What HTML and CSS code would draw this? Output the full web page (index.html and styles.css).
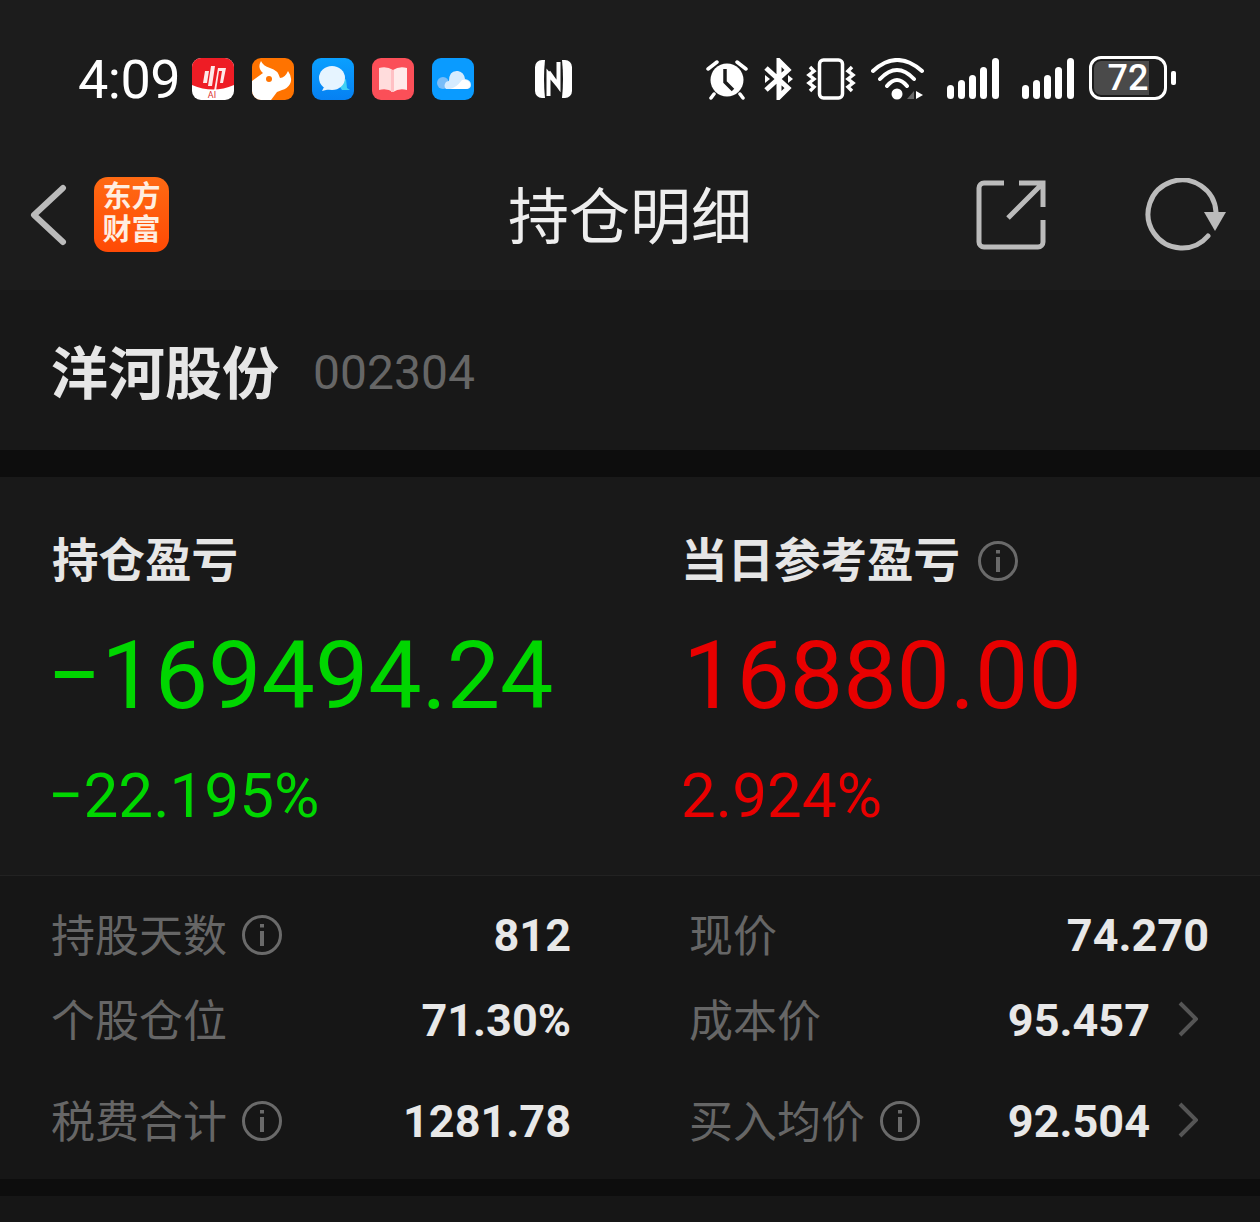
FILE: index.html
```html
<!DOCTYPE html>
<html lang="zh-CN">
<head>
    <meta charset="UTF-8">
    <title>持仓明细</title>
    <link rel="stylesheet" href="styles.css">
</head>
<body>
    <div class="phone">
        <!-- Status bar -->
        <div class="status-bar">
            <span class="clock">4:09</span>
            <div class="app-icons">
                <svg class="app-icon" viewBox="0 0 42 42">
                    <rect width="42" height="42" rx="9" fill="#fff"/>
                    <path d="M0 9a9 9 0 0 1 9-9h24a9 9 0 0 1 9 9v18q-21 9-42 0z" fill="#ee1c25"/>
                    <path d="M11 25l2-12h4l-2 12zM16 28l3-20h4l-3 20zM22 33l4-23h8l-3 15h-3l2-12h-3l-3 20z" fill="#fff" opacity=".9"/>
                    <text x="20" y="40" class="ai-label">AI</text>
                </svg>
                <svg class="app-icon" viewBox="0 0 42 42">
                    <rect width="42" height="42" rx="9" fill="#ff7300"/>
                    <path d="M0 23L11 15Q5 10 9 3Q11 8 18 10Q26 12 28 20Q33 20 36 13Q41 20 38 26Q35 31 30 32L25 34L19 42H9a9 9 0 0 1-9-9z" fill="#fff"/>
                    <circle cx="17" cy="21" r="3" fill="#ff7300"/>
                </svg>
                <svg class="app-icon" viewBox="0 0 42 42">
                    <defs>
                        <linearGradient id="blue-grad" x1="0" y1="0" x2="0" y2="1">
                            <stop offset="0" stop-color="#0aa0ff"/>
                            <stop offset="1" stop-color="#0680f2"/>
                        </linearGradient>
                    </defs>
                    <rect width="42" height="42" rx="9" fill="url(#blue-grad)"/>
                    <path d="M26 26l8-5 1 9 3 2-8 0z" fill="#3fd0f5"/>
                    <ellipse cx="20" cy="20" rx="13" ry="12" fill="#e6f4ff"/>
                    <path d="M12 29l-2 4 8-2z" fill="#e6f4ff"/>
                </svg>
                <svg class="app-icon" viewBox="0 0 42 42">
                    <rect width="42" height="42" rx="9" fill="#fb4f58"/>
                    <path d="M7 10q8-2 14 2v22q-6-4-14-2z" fill="#ffdcdc"/>
                    <path d="M35 10q-8-2-14 2v22q6-4 14-2z" fill="#ffeaea"/>
                    <path d="M19 12h3v22h-3z" fill="#ffc0c4"/>
                </svg>
                <svg class="app-icon" viewBox="0 0 42 42">
                    <rect width="42" height="42" rx="9" fill="#0a9bff"/>
                    <circle cx="11" cy="25" r="6" fill="#79bdf8"/>
                    <path d="M14 31q-3-3 0-7 2-1 3-1 0-11 9-10 6 1 7 8 6 1 6 6 0 4-5 4z" fill="#d6ecff"/>
                    <path d="M18 31q6-1 12-9 5-1 8 3 1 6-5 6z" fill="#fff"/>
                </svg>
            </div>
            <svg class="nfc-icon" viewBox="0 0 37 38">
                <rect width="37" height="38" rx="7" fill="#fff"/>
                <path d="M10 0h17q2 19 0 38H10q-2-19 0-38z" fill="#1c1c1c"/>
                <path d="M13.500 36V14l10 12M23.500 2v24L13.500 12" fill="none" stroke="#fff" stroke-width="4"/>
            </svg>
            <div class="status-right">
                <svg class="alarm-icon" viewBox="0 0 42 42">
                    <circle cx="21" cy="22" r="16.500" fill="#fff"/>
                    <path d="M19 11v13l8 8" fill="none" stroke="#1c1c1c" stroke-width="3.500"/>
                    <path d="M2 11l9-7M40 11l-9-7M8 36l-3 4M34 36l3 4" stroke="#fff" stroke-width="3.500" stroke-linecap="round"/>
                </svg>
                <svg class="bt-icon" viewBox="0 0 30 42">
                    <path d="M2 10l22 20-9 9V3l9 9L2 32" fill="none" stroke="#fff" stroke-width="5"/>
                    <path d="M24 17l5 4-5 4zM1 17v8l5-4z" fill="#fff"/>
                </svg>
                <svg class="vibrate-icon" viewBox="0 0 50 42">
                    <rect x="13.500" y="2" width="23" height="38" rx="4" fill="none" stroke="#fff" stroke-width="3.500"/>
                    <path d="M4 9l4 4-5 4 5 4-5 4 5 4-4 4M46 9l-4 4 5 4-5 4 5 4-5 4 4 4" fill="none" stroke="#fff" stroke-width="3.500"/>
                </svg>
                <svg class="wifi-icon" viewBox="0 0 53 42">
                    <path d="M2 13Q26-9 51 13M9 21Q26 3 43 21M16 28Q26 16 36 28" fill="none" stroke="#fff" stroke-width="4" stroke-linecap="round"/>
                    <circle cx="26" cy="36" r="5.500" fill="#fff"/>
                    <path d="M36 41l7-8v8z" fill="#666"/>
                    <path d="M45 33l7 4-7 4z" fill="#fff"/>
                </svg>
                <svg class="signal-icon" viewBox="0 0 52 41">
                    <rect x="0" y="27" width="7" height="14" rx="3.500"/>
                    <rect x="11" y="22" width="7" height="19" rx="3.500"/>
                    <rect x="22" y="17" width="7" height="24" rx="3.500"/>
                    <rect x="33" y="9" width="7" height="32" rx="3.500"/>
                    <rect x="45" y="0" width="7" height="41" rx="3.500"/>
                </svg>
                <svg class="signal-icon" viewBox="0 0 52 41">
                    <rect x="0" y="27" width="7" height="14" rx="3.500"/>
                    <rect x="11" y="22" width="7" height="19" rx="3.500"/>
                    <rect x="22" y="17" width="7" height="24" rx="3.500"/>
                    <rect x="33" y="9" width="7" height="32" rx="3.500"/>
                    <rect x="45" y="0" width="7" height="41" rx="3.500"/>
                </svg>
                <div class="battery">
                    <div class="battery-body">
                        <div class="battery-fill"><span>72</span></div>
                    </div>
                    <div class="battery-tip"></div>
                </div>
            </div>
        </div>

        <!-- Top navigation -->
        <div class="nav-bar">
            <div class="nav-left">
                <svg class="back-icon" viewBox="0 0 38 62">
                    <path d="M34 4L5 31l29 27" fill="none" stroke="#bbb" stroke-width="6" stroke-linecap="round" stroke-linejoin="round"/>
                </svg>
                <div class="brand-logo"><span>东方</span><span>财富</span></div>
            </div>
            <div class="nav-title">持仓明细</div>
            <div class="nav-right">
                <svg class="share-icon" viewBox="0 0 70 70">
                    <path d="M28 3H8a5 5 0 0 0-5 5v54a5 5 0 0 0 5 5h54a5 5 0 0 0 5-5V40M43 3h24v24M66 4L32 38" fill="none" stroke="#bbb" stroke-width="5"/>
                </svg>
                <svg class="refresh-icon" viewBox="0 0 82 74">
                    <path d="M64 58A34 34 0 1 1 72 34" fill="none" stroke="#bbb" stroke-width="5" stroke-linecap="round"/>
                    <path d="M60 34h22L71 53z" fill="#bbb"/>
                </svg>
            </div>
        </div>

        <!-- Stock name -->
        <div class="stock-head">
            <span class="stock-name">洋河股份</span>
            <span class="stock-code">002304</span>
        </div>

        <div class="gap gap-top"></div>

        <!-- Profit and loss -->
        <div class="card">
            <div class="pnl">
                <div class="pnl-col">
                    <div class="pnl-label">持仓盈亏</div>
                    <div class="pnl-value value-negative green">−169494.24</div>
                    <div class="pnl-percent percent-negative green">−22.195%</div>
                </div>
                <div class="pnl-col">
                    <div class="pnl-label pnl-label-right">当日参考盈亏
                        <svg class="info-icon" viewBox="0 0 40 40"><circle cx="20" cy="20" r="18.500"/><path d="M20 16v15M20 9v3.500"/></svg>
                    </div>
                    <div class="pnl-value red">16880.00</div>
                    <div class="pnl-percent red">2.924%</div>
                </div>
            </div>

            <div class="stats">
                <div class="stat-row">
                    <div class="stat">
                        <span class="stat-label">持股天数
                            <svg class="info-icon" viewBox="0 0 40 40"><circle cx="20" cy="20" r="18.500"/><path d="M20 16v15M20 9v3.500"/></svg>
                        </span>
                        <span class="stat-value">812</span>
                    </div>
                    <div class="stat">
                        <span class="stat-label">现价</span>
                        <span class="stat-value">74.270</span>
                    </div>
                </div>
                <div class="stat-row">
                    <div class="stat">
                        <span class="stat-label">个股仓位</span>
                        <span class="stat-value">71.30%</span>
                    </div>
                    <div class="stat">
                        <span class="stat-label">成本价</span>
                        <span class="stat-value">95.457
                            <svg class="chevron" viewBox="0 0 20 36"><path d="M2 2l16 16L2 34"/></svg>
                        </span>
                    </div>
                </div>
                <div class="stat-row stat-row-last">
                    <div class="stat">
                        <span class="stat-label">税费合计
                            <svg class="info-icon" viewBox="0 0 40 40"><circle cx="20" cy="20" r="18.500"/><path d="M20 16v15M20 9v3.500"/></svg>
                        </span>
                        <span class="stat-value">1281.78</span>
                    </div>
                    <div class="stat">
                        <span class="stat-label">买入均价
                            <svg class="info-icon" viewBox="0 0 40 40"><circle cx="20" cy="20" r="18.500"/><path d="M20 16v15M20 9v3.500"/></svg>
                        </span>
                        <span class="stat-value">92.504
                            <svg class="chevron" viewBox="0 0 20 36"><path d="M2 2l16 16L2 34"/></svg>
                        </span>
                    </div>
                </div>
            </div>
        </div>

        <div class="gap gap-bottom"></div>
        <div class="card-rest"></div>
    </div>
</body>
</html>
```

FILE: styles.css
```css
/* Reset */
body, html {
    margin: 0;
    padding: 0;
    background-color: #161616;
    font-family: Roboto, "Noto Sans CJK SC", sans-serif;
}

.phone {
    width: 1260px;
    height: 1222px;
    overflow: hidden;
}

/* Status bar */
.status-bar {
    height: 158px;
    padding-left: 78px;
    box-sizing: border-box;
    background-color: #1c1c1c;
    display: flex;
    align-items: center;
}

.clock {
    color: #fff;
    font-size: 54px;
    width: 114px;
    letter-spacing: -0.5px;
}

.app-icons {
    display: flex;
    gap: 18px;
}

.app-icon {
    width: 42px;
    height: 42px;
}

.ai-label {
    font-family: Roboto, sans-serif;
    font-size: 9px;
    fill: #d33;
    text-anchor: middle;
}

.nfc-icon {
    width: 37px;
    height: 38px;
    margin-left: 61px;
}

.status-right {
    display: flex;
    align-items: center;
    margin-left: 134px;
}

.alarm-icon {
    width: 42px;
    height: 42px;
}

.bt-icon {
    width: 30px;
    height: 42px;
    margin-left: 16px;
}

.vibrate-icon {
    width: 50px;
    height: 42px;
    margin-left: 12px;
}

.wifi-icon {
    width: 53px;
    height: 42px;
    margin-left: 15px;
}

.signal-icon {
    width: 52px;
    height: 41px;
    margin-left: 23px;
    margin-top: -2px;
    fill: #fff;
}

.battery {
    display: flex;
    align-items: center;
    margin-left: 15px;
    margin-top: -2px;
}

.battery-body {
    width: 78px;
    height: 44px;
    box-sizing: border-box;
    border: 3px solid #fff;
    border-radius: 12px;
    padding: 2px;
}

.battery-fill {
    width: 55px;
    height: 100%;
    background-color: #4a4a4a;
    border-radius: 7px 0 0 7px;
    display: flex;
    align-items: center;
    justify-content: center;
}

.battery-fill span {
    color: #fff;
    font-size: 36px;
    font-weight: 500;
    margin-left: 13px;
}

.battery-tip {
    width: 5px;
    height: 14px;
    margin-left: 4px;
    background-color: #fff;
    border-radius: 2px;
}

/* Nav bar */
.nav-bar {
    height: 132px;
    padding-bottom: 18px;
    box-sizing: border-box;
    background-color: #1c1c1c;
    display: grid;
    grid-template-columns: 1fr auto 1fr;
    align-items: center;
}

.nav-left {
    display: flex;
    align-items: center;
    padding-left: 29px;
}

.back-icon {
    width: 38px;
    height: 62px;
}

.brand-logo {
    width: 75px;
    height: 75px;
    margin-left: 27px;
    margin-top: -2px;
    border-radius: 14px;
    background: linear-gradient(#ff6a13, #ff4a05);
    color: #ffeee0;
    font-size: 29px;
    font-weight: 700;
    line-height: 33px;
    display: flex;
    flex-direction: column;
    align-items: center;
    justify-content: center;
}

.nav-title {
    color: #eee;
    font-size: 61px;
    line-height: 108px;
    margin-top: 6px;
}

.nav-right {
    display: flex;
    align-items: center;
    justify-content: flex-end;
    padding-right: 34px;
}

.share-icon {
    width: 70px;
    height: 70px;
}

.refresh-icon {
    width: 82px;
    height: 74px;
    margin-left: 98px;
}

/* Stock name */
.stock-head {
    height: 160px;
    padding-left: 51px;
    box-sizing: border-box;
    background-color: #181818;
    display: flex;
    align-items: center;
}

.stock-name {
    color: #e6e6e6;
    font-size: 57px;
    font-weight: 700;
    line-height: 70px;
    margin-top: 9px;
}

.stock-code {
    color: #666;
    font-size: 48px;
    margin-left: 34px;
    margin-top: 4px;
}

.gap {
    background-color: #0d0d0d;
}

.gap-top {
    height: 27px;
}

.gap-bottom {
    height: 17px;
}

.card-rest {
    height: 26px;
    background-color: #161616;
}

/* Card */
.card {
    background-color: #161616;
}

.pnl {
    height: 399px;
    padding-left: 52px;
    box-sizing: border-box;
    background-color: #191919;
    border-bottom: 1px solid #222;
    display: flex;
}

.pnl-col {
    flex: none;
    width: 631px;
    padding-top: 51px;
}

.pnl-label {
    color: #e6e6e6;
    font-size: 46.500px;
    font-weight: 700;
    line-height: 66px;
    display: flex;
    align-items: center;
}

.pnl-label-right {
    margin-left: -2px;
}

.pnl-label-right .info-icon {
    margin-left: 18px;
}

.pnl-value {
    font-size: 95px;
    line-height: 110px;
    margin-top: 27px;
}

.pnl-percent {
    font-size: 62px;
    line-height: 80px;
    margin-top: 25px;
    margin-left: -2px;
}

.value-negative {
    margin-left: -5px;
}

.percent-negative {
    margin-left: -4px;
}

.green {
    color: #00d600;
}

.red {
    color: #e80000;
}

.info-icon {
    width: 40px;
    height: 40px;
    margin-left: 16px;
    fill: none;
    stroke: #6a6a6a;
    stroke-width: 3;
}

.info-icon path {
    stroke-width: 4;
}

/* Stats grid */
.stats {
    padding: 17px 51px 15px 51px;
}

.stat-row {
    height: 85px;
    display: grid;
    grid-template-columns: 520px 520px;
    column-gap: 118px;
}

.stat-row-last {
    margin-top: 16px;
}

.stat {
    display: flex;
    align-items: center;
    justify-content: space-between;
}

.stat-label {
    color: #666;
    font-size: 44px;
    line-height: 60px;
    margin-top: 2px;
    display: flex;
    align-items: center;
}

.stat-label .info-icon {
    margin-left: 15px;
    margin-top: -4px;
}

.stat-value {
    color: #e8e8e8;
    font-size: 45px;
    font-weight: 700;
    display: flex;
    align-items: center;
}

.chevron {
    width: 20px;
    height: 36px;
    margin-left: 28px;
    margin-right: 11px;
    margin-top: -3px;
    fill: none;
    stroke: #555;
    stroke-width: 4;
}
```
